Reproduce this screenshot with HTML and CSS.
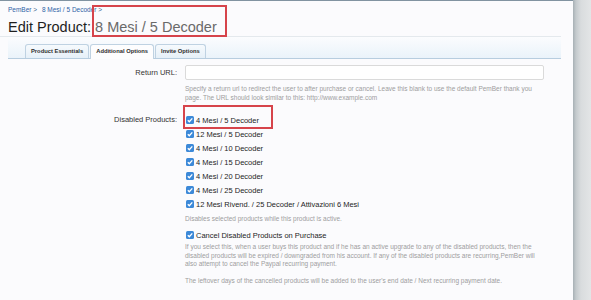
FILE: index.html
```html
<!DOCTYPE html>
<html lang="en">
<head>
<meta charset="UTF-8">
<meta name="viewport" content="width=device-width, initial-scale=1.0">
<title>Edit Product</title>
<link rel="stylesheet" href="styles.css">
</head>
<body>

<div class="page">
  <div class="main">
    <div class="header">
      <div class="crumbs"><a href="#">PemBer</a> &gt; <a href="#" class="crumb-last">8 Mesi / 5 Decoder</a> &gt;</div>
      <h1 class="title">Edit Product: <span class="title-name">8 Mesi / 5 Decoder</span></h1>
    </div>

    <div class="tabbar">
      <span class="tab">Product Essentials</span>
      <span class="tab active">Additional Options</span>
      <span class="tab">Invite Options</span>
    </div>

    <div class="form">
      <div class="row">
        <label class="row-label url-label">Return URL:</label>
        <div class="row-body">
          <div class="input"></div>
          <p class="hint first-hint">Specify a return url to redirect the user to after purchase or cancel. Leave this blank to use the default PemBer thank you<br>page. The URL should look similar to this: http://www.example.com</p>
        </div>
      </div>

      <div class="row disabled-row">
        <label class="row-label">Disabled Products:</label>
        <div class="row-body">
          <ul class="checklist">
            <li class="item boxed"><span class="check"><svg viewBox="0 0 8 8"><path d="M1.8 4.2 L3.3 5.7 L6.3 2.4" /></svg></span>4 Mesi / 5 Decoder</li>
            <li class="item"><span class="check"><svg viewBox="0 0 8 8"><path d="M1.8 4.2 L3.3 5.7 L6.3 2.4" /></svg></span>12 Mesi / 5 Decoder</li>
            <li class="item"><span class="check"><svg viewBox="0 0 8 8"><path d="M1.8 4.2 L3.3 5.7 L6.3 2.4" /></svg></span>4 Mesi / 10 Decoder</li>
            <li class="item"><span class="check"><svg viewBox="0 0 8 8"><path d="M1.8 4.2 L3.3 5.7 L6.3 2.4" /></svg></span>4 Mesi / 15 Decoder</li>
            <li class="item"><span class="check"><svg viewBox="0 0 8 8"><path d="M1.8 4.2 L3.3 5.7 L6.3 2.4" /></svg></span>4 Mesi / 20 Decoder</li>
            <li class="item"><span class="check"><svg viewBox="0 0 8 8"><path d="M1.8 4.2 L3.3 5.7 L6.3 2.4" /></svg></span>4 Mesi / 25 Decoder</li>
            <li class="item"><span class="check"><svg viewBox="0 0 8 8"><path d="M1.8 4.2 L3.3 5.7 L6.3 2.4" /></svg></span>12 Mesi Rivend. / 25 Decoder / Attivazioni 6 Mesi</li>
          </ul>
          <p class="hint small-hint">Disables selected products while this product is active.</p>

          <div class="item cancel-item"><span class="check"><svg viewBox="0 0 8 8"><path d="M1.8 4.2 L3.3 5.7 L6.3 2.4" /></svg></span>Cancel Disabled Products on Purchase</div>
          <p class="hint long-hint">If you select this, when a user buys this product and if he has an active upgrade to any of the disabled products, then the<br>disabled products will be expired / downgraded from his account. If any of the disabled products are recurring,PemBer will<br>also attempt to cancel the Paypal recurring payment.<br><br>The leftover days of the cancelled products will be added to the user's end date / Next recurring payment date.</p>
        </div>
      </div>
    </div>
  </div>
  <div class="side"></div>
</div>

</body>
</html>
```

FILE: styles.css
```css
body {
  margin: 0;
  padding: 0;
  font-family: "Liberation Sans", Arial, sans-serif;
  background-color: #fbfbfd;
  overflow: hidden;
}
.page {
  display: flex;
  height: 300px;
}
.main {
  flex: 1;
  border-top: 1px solid #8193a1;
  padding-right: 12px;
}
.side {
  width: 18px;
  background: linear-gradient(to right, #a7b0b5 0, #c4cacd 3px, #d9dcde 8px, #e3e5e6 100%);
}

/* header */
.header {
  height: 35px;
  border-bottom: 1px solid #e4e9ed;
}
.crumbs {
  padding: 5px 0 0 8px;
  height: 8px;
  font-size: 6.5px;
  line-height: 8px;
  color: #3a5f8c;
}
.crumbs a {
  color: #2e62a6;
  text-decoration: none;
}
.crumb-last {
  margin-left: 3px;
}
.title {
  margin: 3px 0 0;
  padding-left: 8px;
  font-weight: normal;
  font-size: 14.5px;
  line-height: 20px;
  color: #1f1f1f;
}
.title-name {
  position: relative;
  color: #6a6a6a;
}
.title-name::after {
  content: "";
  position: absolute;
  left: -3px;
  top: -14px;
  width: 131px;
  height: 28px;
  border: 2px solid #d6444b;
}

/* tabs */
.tabbar {
  display: flex;
  align-items: flex-end;
  gap: 1px;
  height: 21px;
  margin-left: 8px;
  padding-left: 17px;
  border-bottom: 1px solid #b7cddf;
  background: linear-gradient(to bottom, #fbfcfe 0, #eaf3fa 100%);
}
.tab {
  height: 13px;
  padding: 0 5px;
  border: 1px solid #bfd2e2;
  border-bottom: none;
  border-radius: 3px 3px 0 0;
  background: linear-gradient(to bottom, #f6fafd, #e6f0f8);
  font-size: 5.8px;
  font-weight: bold;
  line-height: 13px;
  color: #2d2d2d;
  white-space: nowrap;
}
.tab.active {
  height: 14px;
  margin-bottom: -1px;
  background: #fdfdfe;
}

/* form */
.form {
  padding: 6px 17px 0 0;
}
.row {
  display: grid;
  grid-template-columns: 177px 1fr;
  column-gap: 8px;
}
.row-label {
  text-align: right;
  font-size: 7.5px;
  line-height: 14px;
  color: #333;
}
.url-label {
  line-height: 15px;
}
.input {
  height: 13px;
  border: 1px solid #dadada;
  border-radius: 2px;
  background-color: #fff;
}
.hint {
  margin: 3.5px 0 0;
  font-size: 6.5px;
  line-height: 9px;
  color: #9d9d9d;
  white-space: nowrap;
}
.disabled-row {
  margin-top: 11.5px;
}
.checklist {
  list-style-type: none;
  margin: 0;
  padding: 0;
}
.item {
  position: relative;
  display: flex;
  align-items: center;
  height: 14px;
  font-size: 7.5px;
  color: #1e1e1e;
  white-space: nowrap;
}
.boxed::after {
  content: "";
  position: absolute;
  left: -2px;
  top: -8px;
  width: 86px;
  height: 20px;
  border: 2px solid #d6444b;
}
.check {
  display: flex;
  width: 8px;
  height: 8px;
  margin: 0 2px 0 1px;
  border-radius: 1.5px;
  background-color: #3c89d8;
}
.check svg {
  width: 8px;
  height: 8px;
  fill: none;
  stroke: #fff;
  stroke-width: 1.3;
}
.small-hint {
  margin-top: 2.5px;
}
.cancel-item {
  margin-top: 5.5px;
}
.long-hint {
  margin-top: 1px;
  line-height: 8.6px;
}
```
